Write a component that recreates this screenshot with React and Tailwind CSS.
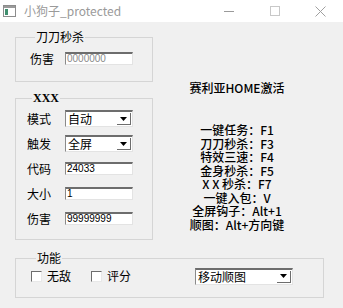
import React from 'react';

const cjk = "font-['Noto_Sans_CJK_SC',sans-serif]";

function Sunken({ className = '', children }) {
  return (
    <div
      className={`flex items-center bg-white border-t-2 border-l border-t-[#6d6d6d] border-l-[#8a8a8a] border-b border-r border-b-[#e3e3e3] border-r-[#e3e3e3] ${className}`}
    >
      {children}
    </div>
  );
}

function TextBox({ value, muted, w = 'w-[68px]' }) {
  return (
    <Sunken className={`${w} h-[13px] pl-[1px]`}>
      <span className={`font-['Liberation_Sans',sans-serif] text-[10px] leading-none ${muted ? 'text-[#8a8a8a]' : 'text-black'}`}>
        {value}
      </span>
    </Sunken>
  );
}

function Combo({ value, w = 'w-[68px]' }) {
  return (
    <Sunken className={`${w} h-[17px] pl-[2px] pr-[1px] justify-between`}>
      <span className={`${cjk} text-[12px] leading-none text-black`}>{value}</span>
      <span className="w-[14px] h-[12px] flex items-center justify-center bg-white border-r border-b border-r-[#6d6d6d] border-b-[#6d6d6d]">
        <svg width="7" height="4" viewBox="0 0 7 4">
          <path d="M0 0h7L3.5 4z" fill="#000" />
        </svg>
      </span>
    </Sunken>
  );
}

function Group({ title, titleClass = '', className = '', children }) {
  return (
    <fieldset className={`border border-[#d5d5d5] ${className}`}>
      <legend className={`ml-[5px] px-[1px] text-[12px] leading-[14px] text-black ${titleClass || cjk}`}>
        {title}
      </legend>
      {children}
    </fieldset>
  );
}

function Row({ label, children, labelW = 'w-[38px]' }) {
  return (
    <div className="flex items-center h-[17px]">
      <span className={`${labelW} ${cjk} text-[12px] leading-none text-black`}>{label}</span>
      {children}
    </div>
  );
}

function Check({ label }) {
  return (
    <div className="flex items-center gap-[5px]">
      <span className="w-[11px] h-[11px] bg-white border-t border-l border-t-[#6d6d6d] border-l-[#6d6d6d] border-b border-r border-b-[#e8e8e8] border-r-[#e8e8e8]" />
      <span className={`${cjk} text-[12px] leading-none text-black`}>{label}</span>
    </div>
  );
}

const keys = [
  '一键任务：F1',
  '刀刀秒杀：F3',
  '特效三速：F4',
  '金身秒杀：F5',
  'X X 秒杀：F7',
  '一键入包：V',
  '全屏钩子：Alt+1',
  '顺图：Alt+方向键',
];

export default function App() {
  return (
    <div className="w-[343px] h-[308px] flex flex-col overflow-hidden bg-[#f0f0f0]">
      <div className="h-[22px] bg-white flex items-center shrink-0">
        <svg className="ml-[3px]" width="13" height="12" viewBox="0 0 13 12">
          <rect x="0.5" y="0.5" width="12" height="11" fill="#fff" stroke="#8c8c8c" />
          <rect x="1" y="1" width="11" height="2" fill="#9a9a9a" />
          <rect x="2" y="4" width="3" height="6" fill="#3f8f6e" />
        </svg>
        <span className={`ml-[8px] ${cjk} text-[12px] leading-none text-[#9a9a9a]`}>小狗子_protected</span>
        <div className="ml-auto flex items-center">
          <span className="w-[10px] h-px bg-[#9a9a9a] mr-[36px]" />
          <span className="w-[10px] h-[10px] border border-[#c8c8c8] mr-[35px]" />
          <svg className="mr-[17px]" width="11" height="11" viewBox="0 0 11 11">
            <path d="M0.5 0.5l10 10M10.5 0.5l-10 10" stroke="#a0a0a0" strokeWidth="1" />
          </svg>
        </div>
      </div>

      <div className="flex-1 px-[15px]">
        <div className="flex">
          <div className="w-[138px] flex flex-col">
            <Group title="刀刀秒杀" className="mt-[8px] pl-[14px] pt-[6px] pb-[14px]">
              <Row label="伤害" labelW="w-[35px]">
                <TextBox value="0000000" muted />
              </Row>
            </Group>
            <Group
              title="XXX"
              titleClass="font-['Liberation_Serif',serif] font-bold text-[9px]"
              className="mt-[9px] pl-[11px] pt-[5px] pb-[12px]"
            >
              <div className="flex flex-col gap-[8px]">
                <Row label="模式"><Combo value="自动" /></Row>
                <Row label="触发"><Combo value="全屏" /></Row>
                <Row label="代码"><TextBox value="24033" /></Row>
                <Row label="大小"><TextBox value="1" /></Row>
                <Row label="伤害"><TextBox value="99999999" /></Row>
              </div>
            </Group>
          </div>

          <div className={`w-[168px] text-center ${cjk} text-black`}>
            <div className="pt-[59px] text-[12px] leading-[14px] font-medium">赛利亚HOME激活</div>
            <div className="mt-[28px] text-[12px] leading-[13.5px] font-medium">
              {keys.map((k) => (
                <div key={k}>{k}</div>
              ))}
            </div>
          </div>
        </div>

        <Group title="功能" className="mt-[11px] w-[309px] pl-[15px] pt-[2px] pb-[12px]">
          <div className="flex items-center h-[18px]">
            <Check label="无敌" />
            <div className="ml-[20px]"><Check label="评分" /></div>
            <div className="ml-[64px]"><Combo value="移动顺图" w="w-[98px]" /></div>
          </div>
        </Group>
      </div>
    </div>
  );
}
